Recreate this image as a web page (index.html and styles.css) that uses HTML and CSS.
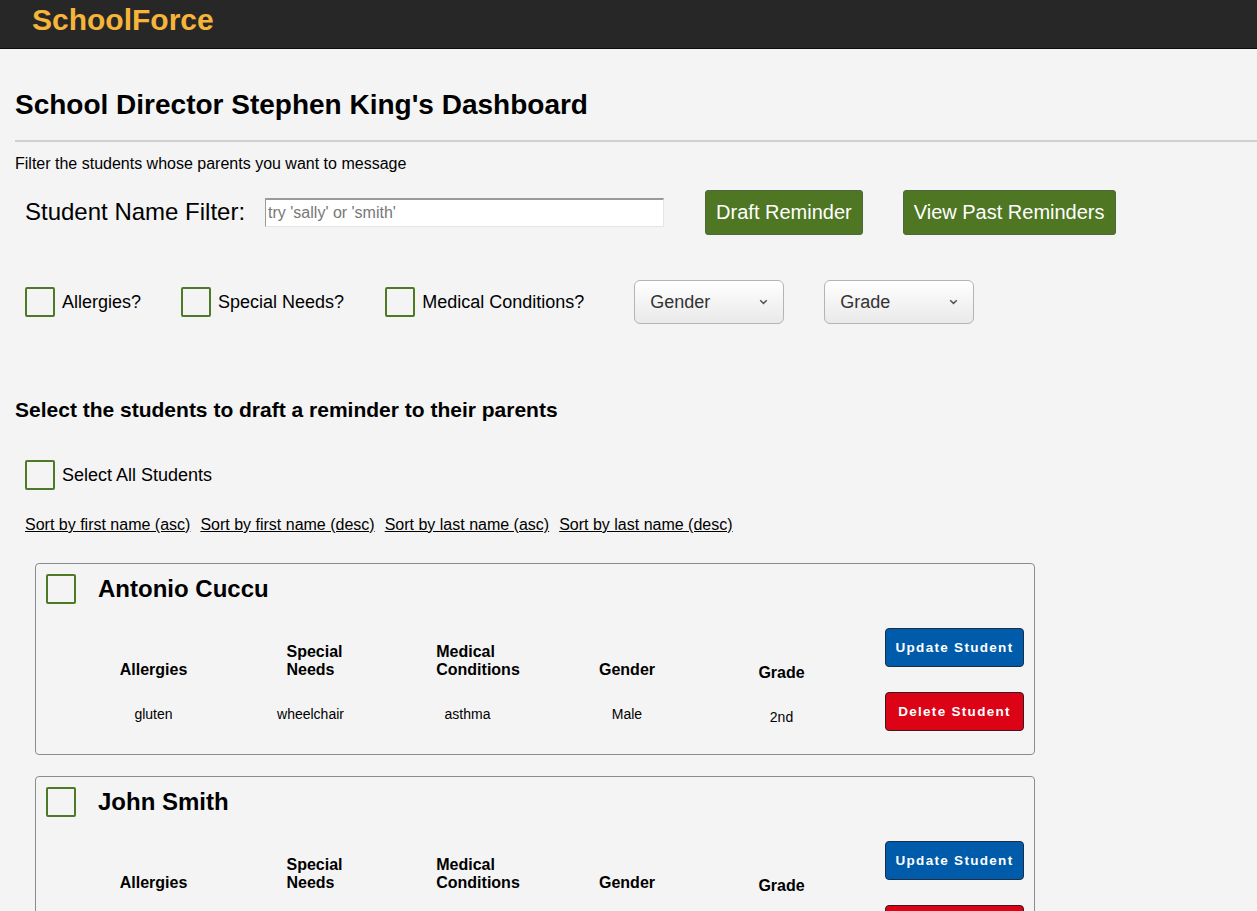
FILE: index.html
```html
<!DOCTYPE html>
<html lang="en">
<head>
<meta charset="utf-8">
<title>SchoolForce</title>
<link rel="stylesheet" href="styles.css">
</head>
<body>
<header class="topbar"><span class="logo">SchoolForce</span></header>
<main class="main">
  <h1 class="title">School Director Stephen King's Dashboard</h1>
  <hr class="rule">
  <p class="intro">Filter the students whose parents you want to message</p>
  <div class="filter-row">
    <label class="filter-label" for="nameFilter">Student Name Filter:</label>
    <input id="nameFilter" class="name-input" type="text" placeholder="try 'sally' or 'smith'">
    <button class="btn-green">Draft Reminder</button>
    <button class="btn-green">View Past Reminders</button>
  </div>
  <div class="check-row">
    <label class="check"><input type="checkbox" class="box"><span>Allergies?</span></label>
    <label class="check"><input type="checkbox" class="box"><span>Special Needs?</span></label>
    <label class="check"><input type="checkbox" class="box"><span>Medical Conditions?</span></label>
    <div class="fake-select first"><span>Gender</span><svg width="9" height="6" viewBox="0 0 9 6"><path d="M1.2 1.2 L4.5 4.4 L7.8 1.2" fill="none" stroke="#555" stroke-width="1.5"/></svg></div>
    <div class="fake-select"><span>Grade</span><svg width="9" height="6" viewBox="0 0 9 6"><path d="M1.2 1.2 L4.5 4.4 L7.8 1.2" fill="none" stroke="#555" stroke-width="1.5"/></svg></div>
  </div>
  <h2 class="subtitle">Select the students to draft a reminder to their parents</h2>
  <label class="check select-all"><input type="checkbox" class="box"><span>Select All Students</span></label>
  <div class="sort-links">
    <a href="#">Sort by first name (asc)</a>
    <a href="#">Sort by first name (desc)</a>
    <a href="#">Sort by last name (asc)</a>
    <a href="#">Sort by last name (desc)</a>
  </div>

  <section class="card">
    <div class="card-top"><input type="checkbox" class="box"><h3 class="name">Antonio Cuccu</h3></div>
    <div class="card-body">
      <div class="cols">
        <div class="col"><div class="col-head"><h4>Allergies</h4></div><div class="col-val">gluten</div></div>
        <div class="col col-special"><div class="col-head"><h4>Special Needs</h4></div><div class="col-val">wheelchair</div></div>
        <div class="col col-medical"><div class="col-head"><h4>Medical Conditions</h4></div><div class="col-val">asthma</div></div>
        <div class="col col-gender"><div class="col-head"><h4>Gender</h4></div><div class="col-val">Male</div></div>
        <div class="col"><div class="col-head tall"><h4>Grade</h4></div><div class="col-val">2nd</div></div>
      </div>
      <div class="actions">
        <button class="btn-update">Update Student</button>
        <button class="btn-delete">Delete Student</button>
      </div>
    </div>
  </section>

  <section class="card">
    <div class="card-top"><input type="checkbox" class="box"><h3 class="name">John Smith</h3></div>
    <div class="card-body">
      <div class="cols">
        <div class="col"><div class="col-head"><h4>Allergies</h4></div><div class="col-val">none</div></div>
        <div class="col col-special"><div class="col-head"><h4>Special Needs</h4></div><div class="col-val">none</div></div>
        <div class="col col-medical"><div class="col-head"><h4>Medical Conditions</h4></div><div class="col-val">none</div></div>
        <div class="col col-gender"><div class="col-head"><h4>Gender</h4></div><div class="col-val">Male</div></div>
        <div class="col"><div class="col-head tall"><h4>Grade</h4></div><div class="col-val">3rd</div></div>
      </div>
      <div class="actions">
        <button class="btn-update">Update Student</button>
        <button class="btn-delete">Delete Student</button>
      </div>
    </div>
  </section>
</main>
</body>
</html>
```

FILE: styles.css
```css
* { box-sizing: border-box; }
html, body { margin: 0; padding: 0; }
body {
  background: #f4f4f4;
  color: #000;
  font-family: "Liberation Sans", Arial, Helvetica, sans-serif;
}
.topbar {
  height: 49px;
  background: #272727;
  border-bottom: 1px solid #0c0c0c;
  padding: 3px 0 0 32px;
}
.logo {
  display: block;
  font-size: 30px;
  line-height: 34px;
  font-weight: bold;
  color: #f6b43a;
}
.main { padding: 0 0 40px 15px; }
.title {
  margin: 40px 0 0;
  font-size: 28px;
  line-height: 32px;
  font-weight: bold;
}
.rule {
  margin: 19px 0 0;
  border: none;
  height: 2px;
  background: #cfcfcf;
}
.intro {
  margin: 13px 0 0;
  font-size: 16px;
  line-height: 18px;
}
.filter-row {
  display: flex;
  align-items: center;
  margin-top: 17px;
  padding-left: 10px;
  height: 45px;
}
.filter-label {
  font-size: 24px;
  line-height: 28px;
  margin-right: 20px;
  margin-top: -2px;
}
.name-input {
  width: 399px;
  height: 29px;
  margin: 0 41px 0 0;
  padding: 0 2px;
  background: #fff;
  border-style: solid;
  border-width: 2px 1px 1px 1px;
  border-color: #9a9a9a #e4e4e4 #e4e4e4 #9a9a9a;
  font-family: "Liberation Sans", Arial, sans-serif;
  font-size: 16px;
  color: #000;
}
.name-input::placeholder { color: #777; }
.btn-green {
  height: 45px;
  padding: 0 10px;
  margin-right: 40px;
  background: #4e7623;
  border: 1px solid #50663b;
  border-radius: 3px;
  color: #fff;
  font-family: "Liberation Sans", Arial, sans-serif;
  font-size: 20px;
}
.check-row {
  display: flex;
  align-items: center;
  margin-top: 45px;
  padding-left: 10px;
  height: 44px;
}
.check {
  display: flex;
  align-items: center;
  font-size: 18px;
  line-height: 20px;
  margin-right: 40px;
}
.check-row .check:nth-child(2) { margin-right: 41px; }
.box {
  -webkit-appearance: none;
  appearance: none;
  width: 30px;
  height: 30px;
  margin: 0 7px 0 0;
  border: 2px solid #4e7a27;
  border-radius: 2px;
  background: transparent;
  flex: none;
}
.fake-select {
  width: 150px;
  height: 44px;
  display: flex;
  align-items: center;
  justify-content: space-between;
  padding: 0 15px 0 15px;
  margin-right: 40px;
  border: 1px solid #b4b4b4;
  border-radius: 6px;
  background: linear-gradient(#ffffff, #e9e9e9);
  font-size: 18px;
  color: #333;
}
.fake-select.first { margin-left: 10px; }
.subtitle {
  margin: 74px 0 0;
  font-size: 21px;
  line-height: 24px;
  font-weight: bold;
}
.select-all {
  margin-top: 38px;
  padding-left: 10px;
  height: 30px;
}
.sort-links {
  display: flex;
  gap: 10px;
  margin-top: 26px;
  padding-left: 10px;
  font-size: 16px;
  line-height: 18px;
}
.sort-links a { color: #000; text-decoration: underline; }
.card {
  width: 1000px;
  margin: 29px 0 0 20px;
  border: 1px solid #8c8c8c;
  border-radius: 4px;
  padding: 10px 10px 23px 10px;
}
.card + .card { margin-top: 21px; }
.card-top {
  display: flex;
  align-items: center;
  height: 30px;
}
.card-top .box { margin-right: 22px; }
.name {
  margin: 0;
  font-size: 24px;
  line-height: 28px;
  font-weight: bold;
}
.card-body {
  display: flex;
  align-items: flex-start;
  margin-top: 24px;
}
.cols {
  display: grid;
  grid-template-columns: repeat(5, 157px);
  padding-left: 29px;
}
.col {
  display: flex;
  flex-direction: column;
  align-items: center;
}
.col-head {
  height: 51px;
  display: flex;
  align-items: flex-end;
}
.col-head.tall { height: 54px; }
.col-head h4 {
  margin: 0;
  width: min-content;
  text-align: left;
  font-size: 16px;
  line-height: 18px;
  font-weight: bold;
}
.col-special .col-head h4 { margin-left: 8px; }
.col-medical .col-head h4 { margin-left: 21px; }
.col-gender .col-head h4 { margin-left: 5px; }
.col-gender .col-val { margin-left: 5px; }
.col-val {
  margin-top: 27px;
  font-size: 14px;
  line-height: 16px;
}
.actions {
  margin-left: auto;
  display: flex;
  flex-direction: column;
  gap: 25px;
}
.btn-update, .btn-delete {
  width: 139px;
  height: 39px;
  border-radius: 4px;
  color: #fff;
  font-family: "Liberation Sans", Arial, sans-serif;
  font-weight: bold;
  font-size: 13.5px;
  letter-spacing: 1.3px;
  padding: 0;
}
.btn-update { background: #005bab; border: 1px solid #1d2f45; }
.btn-delete { background: #dc0316; border: 1px solid #3a1a1a; }
```
